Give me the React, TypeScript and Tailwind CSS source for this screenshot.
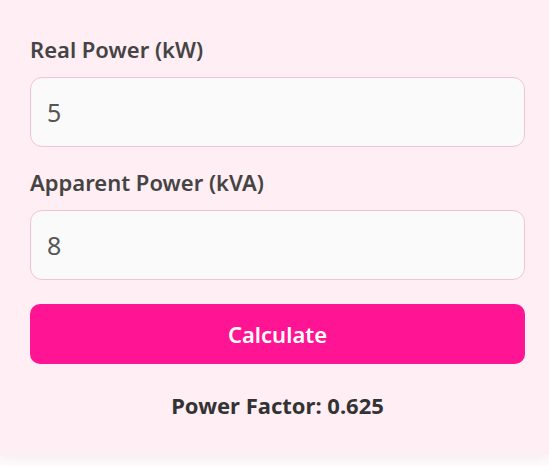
import * as React from 'react';

// ============================================================================
// POWER FACTOR CALCULATOR
// ============================================================================

const Field = ({
  label,
  value,
  onChange,
}: {
  label: string;
  value: string;
  onChange: (v: string) => void;
}): React.JSX.Element => (
  <div className="flex flex-col">
    <label className="mb-[13px] text-[22px] font-semibold leading-[30px] text-[#444]">{label}</label>
    <input
      type="number"
      value={value}
      onChange={(e) => onChange(e.target.value)}
      className="h-[70px] w-full rounded-[12px] border border-[#f3c4cf] bg-[#fafafa] px-4 text-[25px] text-[#555] outline-none"
    />
  </div>
);

export default function App(): React.JSX.Element {
  const [real, setReal] = React.useState('5');
  const [apparent, setApparent] = React.useState('8');
  const [result, setResult] = React.useState<string>('0.625');

  const calculate = () => {
    const p = parseFloat(real);
    const s = parseFloat(apparent);
    if (!isNaN(p) && !isNaN(s) && s !== 0) setResult((p / s).toFixed(3));
  };

  return (
    <div className="min-h-[466px] bg-[#fffafb] font-['Noto_Sans','Open_Sans',sans-serif]">
      <div className="flex flex-col bg-[#ffeef3] pl-[30px] pr-[24px] pt-[34px] pb-[35px] shadow-[0_4px_10px_rgba(0,0,0,0.05)]">
        <Field label="Real Power (kW)" value={real} onChange={setReal} />
        <div className="h-[20px]" />
        <Field label="Apparent Power (kVA)" value={apparent} onChange={setApparent} />
        <button
          type="button"
          onClick={calculate}
          className="mt-[24px] h-[60px] w-full rounded-[10px] bg-[#ff1493] text-[22px] font-semibold text-white"
        >
          Calculate
        </button>
        <p className="mt-[26px] text-center text-[22px] font-bold leading-[30px] text-[#333]">
          Power Factor: {result}
        </p>
      </div>
    </div>
  );
}
